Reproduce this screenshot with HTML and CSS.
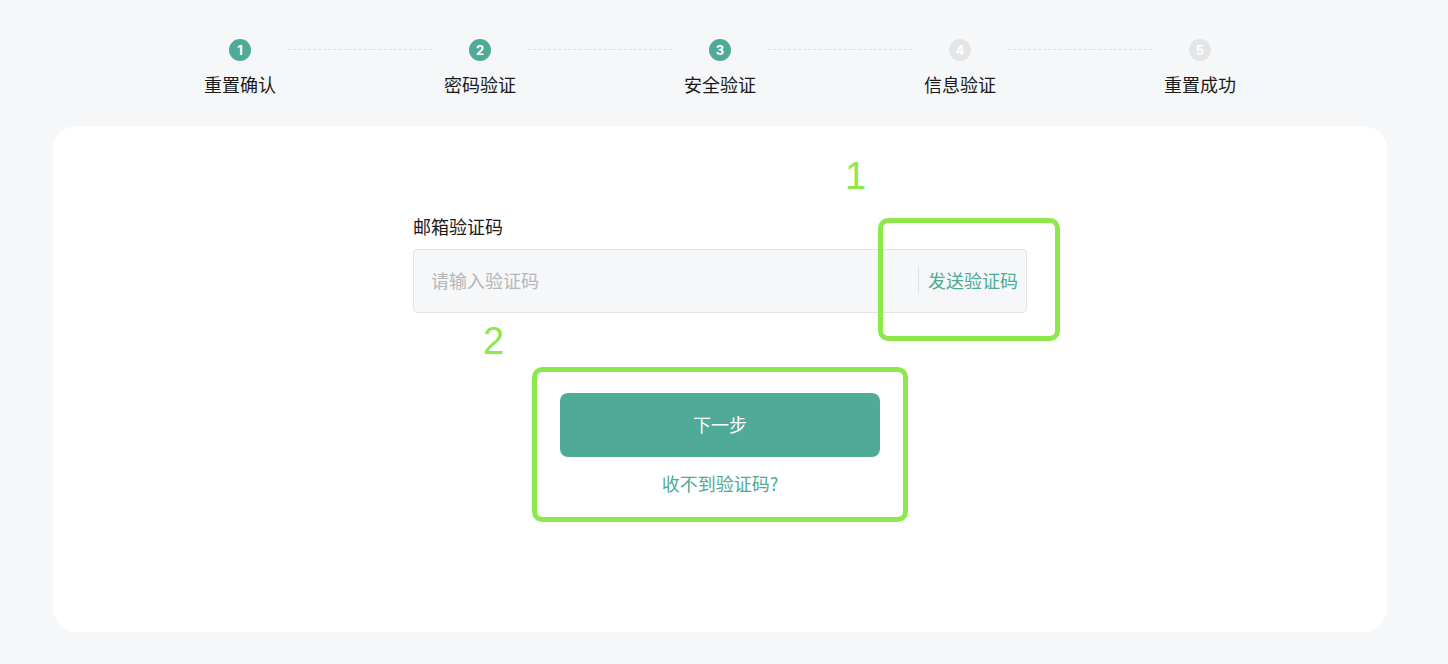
FILE: index.html
```html
<!DOCTYPE html>
<html lang="zh-CN">
<head>
<meta charset="UTF-8">
<meta name="viewport" content="width=device-width, initial-scale=1.0">
<title>重置密码 - 安全验证</title>
<link rel="stylesheet" href="styles.css">
</head>
<body>
<div class="page">
    <div class="steps">
        <div class="step done"><span class="dot">1</span><span class="step-name">重置确认</span></div>
        <div class="line"></div>
        <div class="step done"><span class="dot">2</span><span class="step-name">密码验证</span></div>
        <div class="line"></div>
        <div class="step done"><span class="dot">3</span><span class="step-name">安全验证</span></div>
        <div class="line"></div>
        <div class="step"><span class="dot">4</span><span class="step-name">信息验证</span></div>
        <div class="line"></div>
        <div class="step"><span class="dot">5</span><span class="step-name">重置成功</span></div>
    </div>

    <div class="card">
        <div class="form">
            <label class="field-label">邮箱验证码</label>
            <div class="code-input">
                <input type="text" placeholder="请输入验证码">
                <span class="divider"></span>
                <a class="send-code">发送验证码</a>
            </div>
            <button class="next-btn">下一步</button>
            <a class="help-link">收不到验证码?</a>
        </div>

        <span class="mark mark-1">1</span>
        <div class="hl hl-1"></div>
        <span class="mark mark-2">2</span>
        <div class="hl hl-2"></div>
    </div>
</div>
</body>
</html>
```

FILE: styles.css
```css
body {
    margin: 0;
    background: #f6f7f9;
    font-family: "Noto Sans CJK SC", "Noto Sans", sans-serif;
    color: #1f1f1f;
}

.page {
    width: 1440px;
    display: flex;
    flex-direction: column;
    align-items: center;
    padding-top: 39px;
}

/* steps bar */
.steps {
    display: flex;
    align-items: flex-start;
}

.step {
    width: 96px;
    display: flex;
    flex-direction: column;
    align-items: center;
}

.dot {
    width: 22px;
    height: 22px;
    border-radius: 50%;
    background: #e4e5e7;
    color: #fff;
    font-family: "Inter", "Noto Sans", sans-serif;
    font-size: 13px;
    font-weight: 700;
    line-height: 22px;
    text-align: center;
}

.step.done .dot {
    background: #4faa97;
}

.step-name {
    margin-top: 11px;
    font-size: 18px;
    line-height: 24px;
    white-space: nowrap;
    color: #1a1a1a;
}

.line {
    width: 144px;
    margin-top: 10px;
    border-top: 1px dashed #dcdfe3;
}

/* card */
.card {
    position: relative;
    box-sizing: border-box;
    width: 1334px;
    height: 506px;
    margin-top: 30px;
    background: #fff;
    border-radius: 24px;
    padding-top: 88px;
}

.form {
    width: 614px;
    margin: 0 auto;
    display: flex;
    flex-direction: column;
    align-items: center;
}

.field-label {
    align-self: flex-start;
    font-size: 18px;
    line-height: 24px;
    color: #1a1a1a;
}

.code-input {
    box-sizing: border-box;
    width: 100%;
    height: 64px;
    margin-top: 11px;
    display: flex;
    align-items: center;
    background: #f6f7f9;
    border: 1px solid #e1e3e6;
    border-radius: 4px;
    padding: 0 8px 3px 17px;
}

.code-input input {
    flex: 1;
    border: none;
    outline: none;
    background: transparent;
    font-family: inherit;
    font-size: 18px;
    color: #333;
    padding: 0;
}

.code-input input::placeholder {
    color: #b4b6b9;
}

.divider {
    width: 1px;
    height: 28px;
    background: #e1e3e6;
    margin-right: 9px;
}

.send-code {
    font-size: 18px;
    color: #4faa97;
    cursor: pointer;
}

.next-btn {
    width: 320px;
    height: 64px;
    margin-top: 80px;
    padding-bottom: 3px;
    border: none;
    border-radius: 8px;
    background: #4faa97;
    color: #fff;
    font-family: inherit;
    font-size: 18px;
    cursor: pointer;
}

.help-link {
    margin-top: 14px;
    font-size: 18px;
    line-height: 24px;
    color: #4faa97;
    cursor: pointer;
}

/* annotation overlays */
.mark {
    position: absolute;
    font-family: "Liberation Sans", sans-serif;
    font-size: 38px;
    line-height: 40px;
    color: #8de84b;
}

.mark-1 { left: 792px; top: 30px; }
.mark-2 { left: 430px; top: 195px; }

.hl {
    position: absolute;
    box-sizing: border-box;
    border: 5px solid #8de84b;
    border-radius: 10px;
}

.hl-1 { left: 825px; top: 92px; width: 182px; height: 123px; }
.hl-2 { left: 479px; top: 241px; width: 376px; height: 155px; }
```
